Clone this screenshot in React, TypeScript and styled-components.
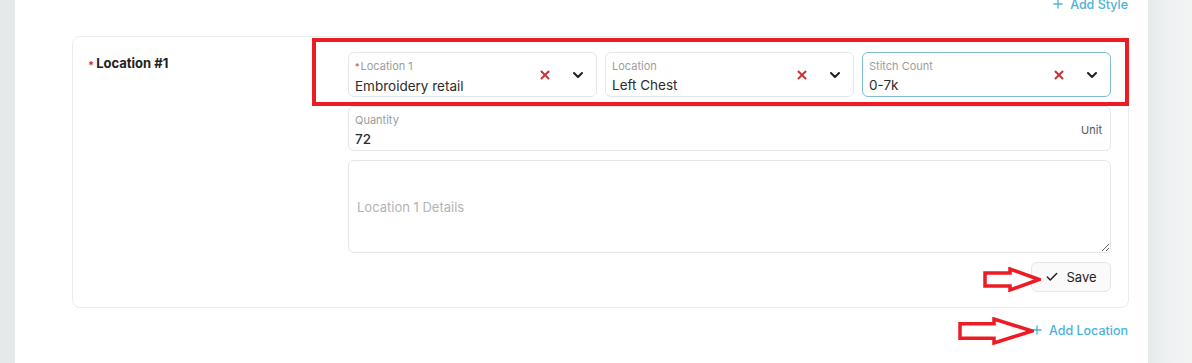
import styled, { createGlobalStyle } from "styled-components";
import { Check, ChevronDown, Plus, X } from "lucide-react";

const GlobalStyle = createGlobalStyle`
  body {
    margin: 0;
    font-family: Inter, "Noto Sans", sans-serif;
    color: #2b2b2b;
    background: #fff;
  }
`;

const selects = [
  { label: "Location 1", value: "Embroidery retail", required: true },
  { label: "Location", value: "Left Chest" },
  { label: "Stitch Count", value: "0-7k", active: true },
];

function Arrow({ w, h, head }: { w: number; h: number; head: number }) {
  const mid = h / 2;
  const shaft = h * 0.26;
  const pts = [
    [2, mid - shaft],
    [head, mid - shaft],
    [head, 2],
    [w - 2, mid],
    [head, h - 2],
    [head, mid + shaft],
    [2, mid + shaft],
  ]
    .map((p) => p.join(","))
    .join(" ");
  return (
    <svg width={w} height={h} viewBox={`0 0 ${w} ${h}`}>
      <polygon points={pts} fill="#fff" stroke="#ed1c24" strokeWidth="3.5" strokeLinejoin="miter" />
    </svg>
  );
}

export default function App() {
  return (
    <Page>
      <GlobalStyle />
      <SideStrip />
      <Main>
        <LinkRow>
          <AddLink $top>
            <Plus size={14} strokeWidth={2.2} /> Add Style
          </AddLink>
        </LinkRow>
        <Card>
          <SectionLabel>
            <Star>*</Star>Location #1
          </SectionLabel>
          <Content>
            <SelectRow>
              {selects.map((s) => (
                <Field key={s.label} $active={s.active}>
                  <FieldText>
                    <FieldLabel>
                      {s.required && <Star $small>*</Star>}
                      {s.label}
                    </FieldLabel>
                    <FieldValue>{s.value}</FieldValue>
                  </FieldText>
                  <Icons>
                    <X size={14} strokeWidth={3.4} color="#c9353a" />
                    <ChevronDown size={16} strokeWidth={3} color="#1f1f1f" />
                  </Icons>
                </Field>
              ))}
            </SelectRow>
            <Field>
              <FieldText>
                <FieldLabel>Quantity</FieldLabel>
                <FieldValue $strong>72</FieldValue>
              </FieldText>
              <Unit>Unit</Unit>
            </Field>
            <Details placeholder="Location 1 Details" />
            <SaveRow>
              <SaveButton>
                <Check size={14} strokeWidth={2.6} /> Save
              </SaveButton>
            </SaveRow>
          </Content>
        </Card>
        <LinkRow $bottom>
          <AddLink>
            <Plus size={14} strokeWidth={2.2} /> Add Location
          </AddLink>
        </LinkRow>
      </Main>
      <RightStrip />

      <HighlightBox />
      <ArrowMark style={{ left: 983, top: 267 }}>
        <Arrow w={58} h={25} head={27} />
      </ArrowMark>
      <ArrowMark style={{ left: 958, top: 317 }}>
        <Arrow w={76} h={28} head={36} />
      </ArrowMark>
    </Page>
  );
}

const Page = styled.div`
  position: relative;
  display: flex;
  width: 1192px;
  height: 363px;
  overflow: hidden;
`;

const SideStrip = styled.div`
  width: 15px;
  flex-shrink: 0;
  background: #e6e9e9;
`;

const RightStrip = styled.div`
  width: 44px;
  flex-shrink: 0;
  background: linear-gradient(90deg, #e7eaea 0%, #eef1f1 40%, #f2f4f4 100%);
`;

const Main = styled.div`
  flex: 1;
  background: #fff;
  padding: 0 19px 0 57px;
`;

const LinkRow = styled.div<{ $bottom?: boolean }>`
  display: flex;
  justify-content: flex-end;
  height: ${(p) => (p.$bottom ? "auto" : "36px")};
  margin-top: ${(p) => (p.$bottom ? "14px" : "0")};
  padding-right: 1px;
`;

const AddLink = styled.a<{ $top?: boolean }>`
  display: flex;
  align-items: center;
  gap: 5px;
  height: 16px;
  margin-top: ${(p) => (p.$top ? "-4px" : "0")};
  font-size: 12.5px;
  font-weight: 500;
  color: #4cb2d8;
  cursor: pointer;
`;

const Card = styled.div`
  display: grid;
  grid-template-columns: 260px 1fr;
  border: 1px solid #ececec;
  border-radius: 8px;
  padding: 15px 17px 15px 15px;
`;

const SectionLabel = styled.div`
  padding-top: 3px;
  font-size: 13px;
  line-height: 16px;
  font-weight: 700;
  color: #222;
`;

const Star = styled.span<{ $small?: boolean }>`
  color: #c9353a;
  font-size: ${(p) => (p.$small ? "9px" : "11px")};
  margin-right: ${(p) => (p.$small ? "1px" : "2px")};
  vertical-align: ${(p) => (p.$small ? "0" : "-1px")};
`;

const Content = styled.div`
  display: flex;
  flex-direction: column;
  gap: 9px;
`;

const SelectRow = styled.div`
  display: grid;
  grid-template-columns: repeat(3, 1fr);
  gap: 8px;
`;

const Field = styled.div<{ $active?: boolean }>`
  display: flex;
  align-items: center;
  height: 45px;
  box-sizing: border-box;
  border: 1px solid ${(p) => (p.$active ? "#7fbccc" : "#e6e6e6")};
  border-radius: 6px;
  padding: 0 8px 0 6px;
`;

const FieldText = styled.div`
  flex: 1;
  display: flex;
  flex-direction: column;
  align-self: flex-start;
  padding-top: 6px;
  gap: 3px;
`;

const FieldLabel = styled.div`
  font-size: 11px;
  line-height: 14px;
  color: #9d9d9d;
`;

const FieldValue = styled.div<{ $strong?: boolean }>`
  font-size: 13.5px;
  line-height: 18px;
  font-weight: ${(p) => (p.$strong ? 500 : 400)};
  color: #2c2c2c;
`;

const Icons = styled.div`
  display: flex;
  align-items: center;
  gap: 18px;
  padding-right: 2px;
`;

const Unit = styled.div`
  font-size: 11px;
  color: #555;
  margin-top: 2px;
`;

const Details = styled.textarea`
  height: 93px;
  box-sizing: border-box;
  border: 1px solid #e6e6e6;
  border-radius: 6px;
  padding: 38px 8px 8px;
  font-family: inherit;
  font-size: 13px;
  line-height: 16px;
  resize: vertical;
  outline: none;
  &::placeholder {
    color: #b3b3b3;
  }
`;

const SaveRow = styled.div`
  display: flex;
  justify-content: flex-end;
`;

const SaveButton = styled.button`
  display: flex;
  align-items: center;
  justify-content: center;
  gap: 7px;
  width: 80px;
  height: 30px;
  border: 1px solid #e6e6e6;
  border-radius: 6px;
  background: #fafafa;
  font-family: inherit;
  font-size: 13px;
  color: #222;
  cursor: pointer;
`;

const HighlightBox = styled.div`
  position: absolute;
  left: 312px;
  top: 38px;
  width: 817px;
  height: 68px;
  box-sizing: border-box;
  border: 4.5px solid #ed1c24;
  pointer-events: none;
`;

const ArrowMark = styled.div`
  position: absolute;
  line-height: 0;
  pointer-events: none;
`;
